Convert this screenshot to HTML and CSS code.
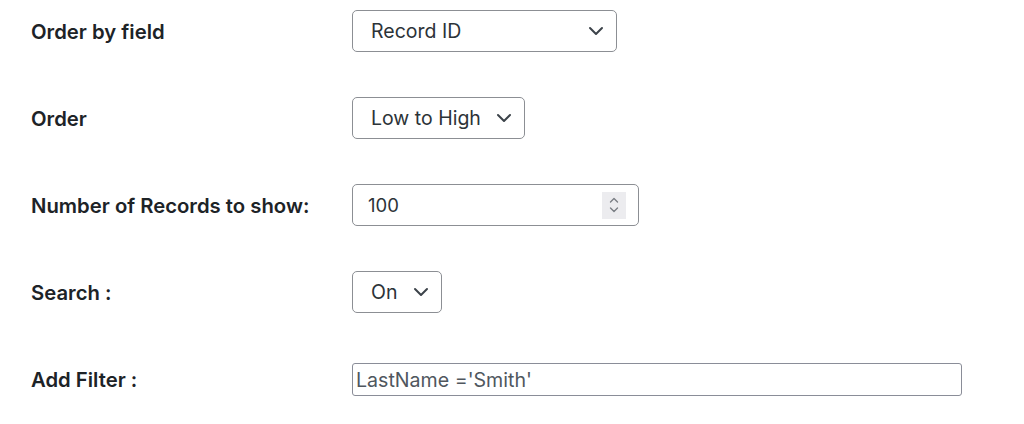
FILE: index.html
```html
<!DOCTYPE html>
<html lang="en">
<head>
<meta charset="utf-8">
<title>Settings</title>
<link rel="stylesheet" href="styles.css">
</head>
<body>
<div class="form">
  <div class="row">
    <div class="label">Order by field</div>
    <div class="control">
      <div class="select w-record"><span>Record ID</span>
        <svg class="chev" width="16" height="10" viewBox="0 0 16 10"><path d="M2 2 L8 8 L14 2" fill="none" stroke="#3c434a" stroke-width="2" stroke-linecap="round" stroke-linejoin="round"/></svg>
      </div>
    </div>
  </div>
  <div class="row">
    <div class="label">Order</div>
    <div class="control">
      <div class="select w-order"><span>Low to High</span>
        <svg class="chev" width="16" height="10" viewBox="0 0 16 10"><path d="M2 2 L8 8 L14 2" fill="none" stroke="#3c434a" stroke-width="2" stroke-linecap="round" stroke-linejoin="round"/></svg>
      </div>
    </div>
  </div>
  <div class="row">
    <div class="label">Number of Records to show:</div>
    <div class="control">
      <div class="number"><span>100</span>
        <div class="spin">
          <svg width="12" height="22" viewBox="0 0 12 22"><path d="M2.5 8 L6 4.5 L9.5 8" fill="none" stroke="#7a7e85" stroke-width="1.4" stroke-linecap="round" stroke-linejoin="round"/><path d="M2.5 14 L6 17.5 L9.5 14" fill="none" stroke="#7a7e85" stroke-width="1.4" stroke-linecap="round" stroke-linejoin="round"/></svg>
        </div>
      </div>
    </div>
  </div>
  <div class="row">
    <div class="label">Search :</div>
    <div class="control">
      <div class="select w-on"><span>On</span>
        <svg class="chev" width="16" height="10" viewBox="0 0 16 10"><path d="M2 2 L8 8 L14 2" fill="none" stroke="#3c434a" stroke-width="2" stroke-linecap="round" stroke-linejoin="round"/></svg>
      </div>
    </div>
  </div>
  <div class="row">
    <div class="label">Add Filter :</div>
    <div class="control">
      <div class="text"><span>LastName ='Smith'</span></div>
    </div>
  </div>
</div>
</body>
</html>
```
FILE: styles.css
```css
html, body {
  margin: 0;
  padding: 0;
  background: #ffffff;
}
body {
  font-family: "Inter", "Noto Sans", sans-serif;
  color: #1d2327;
}
.form {
  display: flex;
  flex-direction: column;
  padding-top: 10px;
}
.row {
  display: flex;
  align-items: center;
  height: 42px;
  margin-bottom: 45px;
}
.label {
  width: 321px;
  padding-left: 31px;
  font-size: 20.3px;
  font-weight: 600;
  color: #1d2327;
}
.control {
  display: flex;
  align-items: center;
}
.select, .number {
  box-sizing: border-box;
  height: 42px;
  border: 1px solid #8c8f94;
  border-radius: 5px;
  display: flex;
  align-items: center;
  justify-content: space-between;
  padding: 0 12px 0 18px;
  font-size: 19.5px;
  color: #2c3338;
  background: #fff;
}
.w-record { width: 265px; }
.w-order { width: 173px; }
.w-on { width: 90px; }
.chev { display: block; }
.number {
  width: 287px;
  padding: 0 12px 0 15px;
  font-size: 18.5px;
}
.spin {
  width: 24px;
  height: 27px;
  background: #ececef;
  display: flex;
  align-items: center;
  justify-content: center;
}
.text {
  box-sizing: border-box;
  width: 610px;
  height: 33px;
  border: 1px solid #8a8d98;
  border-radius: 3px;
  display: flex;
  align-items: center;
  padding-left: 3px;
  font-size: 19.6px;
  color: #50575e;
  margin-top: 1px;
}
```
